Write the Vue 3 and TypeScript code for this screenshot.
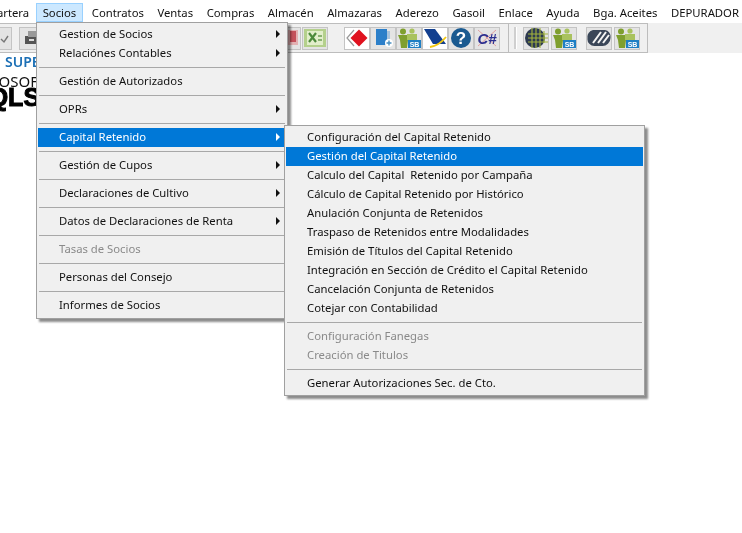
<script setup lang="ts">
type Entry = { label?: string; arrow?: boolean; disabled?: boolean; active?: boolean; sep?: boolean }

const menus: string[] = ['Cartera', 'Socios', 'Contratos', 'Ventas', 'Compras', 'Almacén', 'Almazaras', 'Aderezo', 'Gasoil', 'Enlace', 'Ayuda', 'Bga. Aceites', 'DEPURADOR']

const socios: Entry[] = [
  { label: 'Gestion de Socios', arrow: true },
  { label: 'Relaciónes Contables', arrow: true },
  { sep: true },
  { label: 'Gestión de Autorizados' },
  { sep: true },
  { label: 'OPRs', arrow: true },
  { sep: true },
  { label: 'Capital Retenido', arrow: true, active: true },
  { sep: true },
  { label: 'Gestión de Cupos', arrow: true },
  { sep: true },
  { label: 'Declaraciones de Cultivo', arrow: true },
  { sep: true },
  { label: 'Datos de Declaraciones de Renta', arrow: true },
  { sep: true },
  { label: 'Tasas de Socios', disabled: true },
  { sep: true },
  { label: 'Personas del Consejo' },
  { sep: true },
  { label: 'Informes de Socios' },
]

const capital: Entry[] = [
  { label: 'Configuración del Capital Retenido' },
  { label: 'Gestión del Capital Retenido', active: true },
  { label: 'Calculo del Capital\u00a0 Retenido por Campaña' },
  { label: 'Cálculo de Capital Retenido por Histórico' },
  { label: 'Anulación Conjunta de Retenidos' },
  { label: 'Traspaso de Retenidos entre Modalidades' },
  { label: 'Emisión de Títulos del Capital Retenido' },
  { label: 'Integración en Sección de Crédito el Capital Retenido' },
  { label: 'Cancelación Conjunta de Retenidos' },
  { label: 'Cotejar con Contabilidad' },
  { sep: true },
  { label: 'Configuración Fanegas', disabled: true },
  { label: 'Creación de Titulos', disabled: true },
  { sep: true },
  { label: 'Generar Autorizaciones Sec. de Cto.' },
]
</script>

<template>
  <div class="app">
    <nav class="menubar">
      <span v-for="m in menus" :key="m" class="top" :class="{ open: m === 'Socios' }">{{ m }}</span>
    </nav>

    <div class="toolbar">
      <div class="group one">
        <span class="btn check">
          <svg width="24" height="20" viewBox="0 0 24 20"><path d="M14 11l3 3 4-6" fill="none" stroke="#777" stroke-width="1.4" /></svg>
        </span>
        <span class="btn printer">
          <svg width="20" height="20" viewBox="0 0 20 20"><rect x="3" y="8" width="13" height="8" fill="#555" /><rect x="6" y="3" width="8" height="6" fill="#999" /><rect x="7" y="11" width="5" height="2" fill="#ddd" /></svg>
        </span>
        <span class="fill"></span>
        <span class="btn">
          <svg width="24" height="20" viewBox="0 0 24 20"><rect x="9" y="2" width="13" height="15" fill="#e3b0b2" /><rect x="14" y="3" width="6" height="11" fill="#c4505a" /></svg>
        </span>
        <span class="btn excel">
          <svg width="24" height="20" viewBox="0 0 24 20"><rect x="1" y="1" width="22" height="18" fill="#b4d08c" /><rect x="4" y="3" width="16" height="14" fill="#e2eecb" /><path d="M6 5l7 9M13 5l-7 9" stroke="#4d8a3c" stroke-width="2.2" /><path d="M15 8h4M15 12h4" stroke="#6f9f55" stroke-width="1.6" /></svg>
        </span>
        <span class="gap"></span>
        <span class="btn light">
          <svg width="24" height="20" viewBox="0 0 24 20"><path d="M9 2L2 10l7 8" fill="none" stroke="#999" stroke-width="1.2" /><path d="M14 1.500l8.500 8.500-8.500 8.500-8.500-8.500z" fill="#e0121f" /></svg>
        </span>
        <span class="btn">
          <svg width="24" height="20" viewBox="0 0 24 20"><rect x="5" y="1" width="11" height="16" fill="#2c7fc9" /><path d="M16 3h3v10h-3z" fill="#a9c3dc" /><circle cx="18" cy="15" r="4" fill="#fff" /><path d="M18 12.500v5M15.500 15h5" stroke="#4a90c2" stroke-width="1.4" /></svg>
        </span>
        <span class="btn">
          <svg width="24" height="20" viewBox="0 0 24 20"><use href="#people" /></svg>
        </span>
        <span class="btn light">
          <svg width="24" height="20" viewBox="0 0 24 20"><path d="M1 1h11l11 15H10z" fill="#123f8f" /><path d="M7 19c7-1 12-5 16-10" fill="none" stroke="#f2c811" stroke-width="1.8" /></svg>
        </span>
        <span class="btn">
          <svg width="24" height="20" viewBox="0 0 24 20"><circle cx="12" cy="10" r="10" fill="#1a5a90" /><text x="12" y="16" text-anchor="middle" class="qmark">?</text></svg>
        </span>
        <span class="btn">
          <svg width="24" height="20" viewBox="0 0 24 20"><path d="M3 2l18 16M21 2L3 18" stroke="#e2a0a0" stroke-width="1" /><text x="12" y="16" text-anchor="middle" class="csharp">C#</text></svg>
        </span>
      </div>

      <div class="group two">
        <span class="grip"></span>
        <span class="btn">
          <svg width="24" height="20" viewBox="0 0 24 20"><circle cx="11" cy="10" r="10" fill="#2d3a50" /><path d="M8 0v20M12 0v20M16 0v20M20 3v12M4 6h20M4 10h20M4 14h20" stroke="#a3b33c" stroke-width="1.1" /></svg>
        </span>
        <span class="btn spaced">
          <svg width="24" height="20" viewBox="0 0 24 20"><use href="#people" /></svg>
        </span>
        <span class="gap small"></span>
        <span class="btn">
          <svg width="24" height="20" viewBox="0 0 24 20"><path d="M6 2h12a6 7 0 0 1 5.500 8 8 8 0 0 1-8.500 8H8a7 7 0 0 1-7.500-8 7 7 0 0 1 5.500-8z" fill="#3a4658" /><path d="M6 15l8-11M11 15l8-11M16 15l6-8" stroke="#f4f4f4" stroke-width="2" /></svg>
        </span>
        <span class="btn spaced">
          <svg width="24" height="20" viewBox="0 0 24 20"><use href="#people" /></svg>
        </span>
      </div>
      <div class="rest"></div>
    </div>

    <svg class="defs" width="0" height="0">
      <symbol id="people" viewBox="0 0 24 20">
        <circle cx="6" cy="3.500" r="3" fill="#7f9f2e" /><path d="M1 7h10v5l-1 8H4l-1-8z" fill="#7f9f2e" />
        <circle cx="15" cy="3" r="2.600" fill="#a9c25e" /><path d="M10 6h10v6H10z" fill="#a9c25e" />
        <path d="M11 12h13v8H11z" fill="#1f7fc4" /><text x="17.500" y="19" text-anchor="middle" class="sb">SB</text>
      </symbol>
    </svg>

    <main class="content">
      <div class="super">SUPERVISOR</div>
      <div class="soft">MICROSOFT</div>
      <div class="sql">SQLSERVER</div>
    </main>

    <div class="menu socios">
      <template v-for="(e, i) in socios" :key="i">
        <div v-if="e.sep" class="sep"></div>
        <div v-else class="item" :class="{ active: e.active, disabled: e.disabled }">
          <span>{{ e.label }}</span>
          <i v-if="e.arrow" class="arrow"></i>
        </div>
      </template>
    </div>

    <div class="menu capital">
      <template v-for="(e, i) in capital" :key="i">
        <div v-if="e.sep" class="sep"></div>
        <div v-else class="item" :class="{ active: e.active, disabled: e.disabled }">
          <span>{{ e.label }}</span>
        </div>
      </template>
    </div>
  </div>
</template>

<style scoped>
.app {
  position: relative;
  width: 742px;
  height: 533px;
  overflow: hidden;
  background: #fff;
  font-family: "Noto Sans", "Open Sans", sans-serif;
  font-size: 11.3px;
  color: #111;
  filter: blur(0.45px);
}
.menubar {
  display: flex;
  height: 23px;
  align-items: flex-start;
  padding-top: 3px;
  box-sizing: border-box;
  margin-left: -17px;
  white-space: nowrap;
}
.top {
  flex: none;
  height: 19px;
  line-height: 18px;
  padding: 0 5.75px;
  box-sizing: border-box;
  border: 1px solid transparent;
}
.top.open {
  background: #cce8ff;
  border-color: #99d1ff;
  margin-right: 2px;
}
.toolbar {
  display: flex;
  height: 30px;
  background: #f0f0f0;
}
.group {
  display: flex;
  align-items: center;
  border: 1px solid #bdbdbd;
  border-left: 0;
  box-sizing: border-box;
  height: 30px;
}
.group.one {
  width: 509px;
  padding-right: 8px;
}
.group.two {
  width: 139px;
  padding-left: 3px;
}
.rest {
  flex: 1;
}
.fill {
  flex: 1;
}
.gap {
  width: 16px;
}
.gap.small {
  width: 9px;
}
.btn {
  width: 26px;
  height: 23px;
  flex: none;
  display: flex;
  align-items: center;
  justify-content: center;
  background: #e4e4e4;
  border: 1px solid #c4c4c4;
  box-sizing: border-box;
}
.btn.light {
  background: #fff;
}
.btn.check {
  margin-left: -14px;
}
.btn.printer {
  margin-left: 7px;
}
.btn.excel {
  margin-left: 1px;
}
.btn.spaced {
  margin-left: 2px;
}
.grip {
  width: 2px;
  height: 22px;
  margin: 0 6px 0 2px;
  background: #cfcfcf;
  border-right: 1px solid #fff;
}
.defs {
  position: absolute;
}
.qmark {
  font: 700 17px "Liberation Sans", sans-serif;
  fill: #fff;
}
.csharp {
  font: italic 700 15px "Liberation Sans", sans-serif;
  fill: #2c2f8f;
}
.sb {
  font: 700 7px "Liberation Sans", sans-serif;
  fill: #fff;
}
.content {
  white-space: nowrap;
}
.super {
  margin-left: 5px;
  font-size: 14px;
  line-height: 17px;
  font-weight: 600;
  color: #1b6fb5;
}
.soft {
  margin-left: -39px;
  font-size: 15px;
  line-height: 20px;
  margin-top: 1px;
  color: #111;
}
.sql {
  margin-left: -28px;
  margin-top: -6px;
  font: 900 25px/25px "Liberation Sans", sans-serif;
  -webkit-text-stroke: 1px #000;
  color: #000;
}
.menu {
  position: absolute;
  background: #f0f0f0;
  border: 1px solid #a0a0a0;
  box-sizing: border-box;
  padding: 2px 1px;
  box-shadow: 3px 3px 2px rgba(0, 0, 0, 0.45);
}
.socios {
  left: 36px;
  top: 22px;
  width: 252px;
  height: 297px;
}
.capital {
  left: 284px;
  top: 125px;
  width: 361px;
  height: 271px;
}
.item {
  position: relative;
  height: 19px;
  line-height: 18px;
  padding-left: 21px;
  white-space: nowrap;
}
.item.active {
  background: #0078d7;
  color: #fff;
}
.item.disabled {
  color: #8a8a8a;
}
.sep {
  height: 1px;
  margin: 4px 1px;
  background: #a8a8a8;
}
.arrow {
  position: absolute;
  right: 6px;
  top: 5px;
  border-left: 4px solid #111;
  border-top: 4px solid transparent;
  border-bottom: 4px solid transparent;
}
.active .arrow {
  border-left-color: #fff;
}
</style>
